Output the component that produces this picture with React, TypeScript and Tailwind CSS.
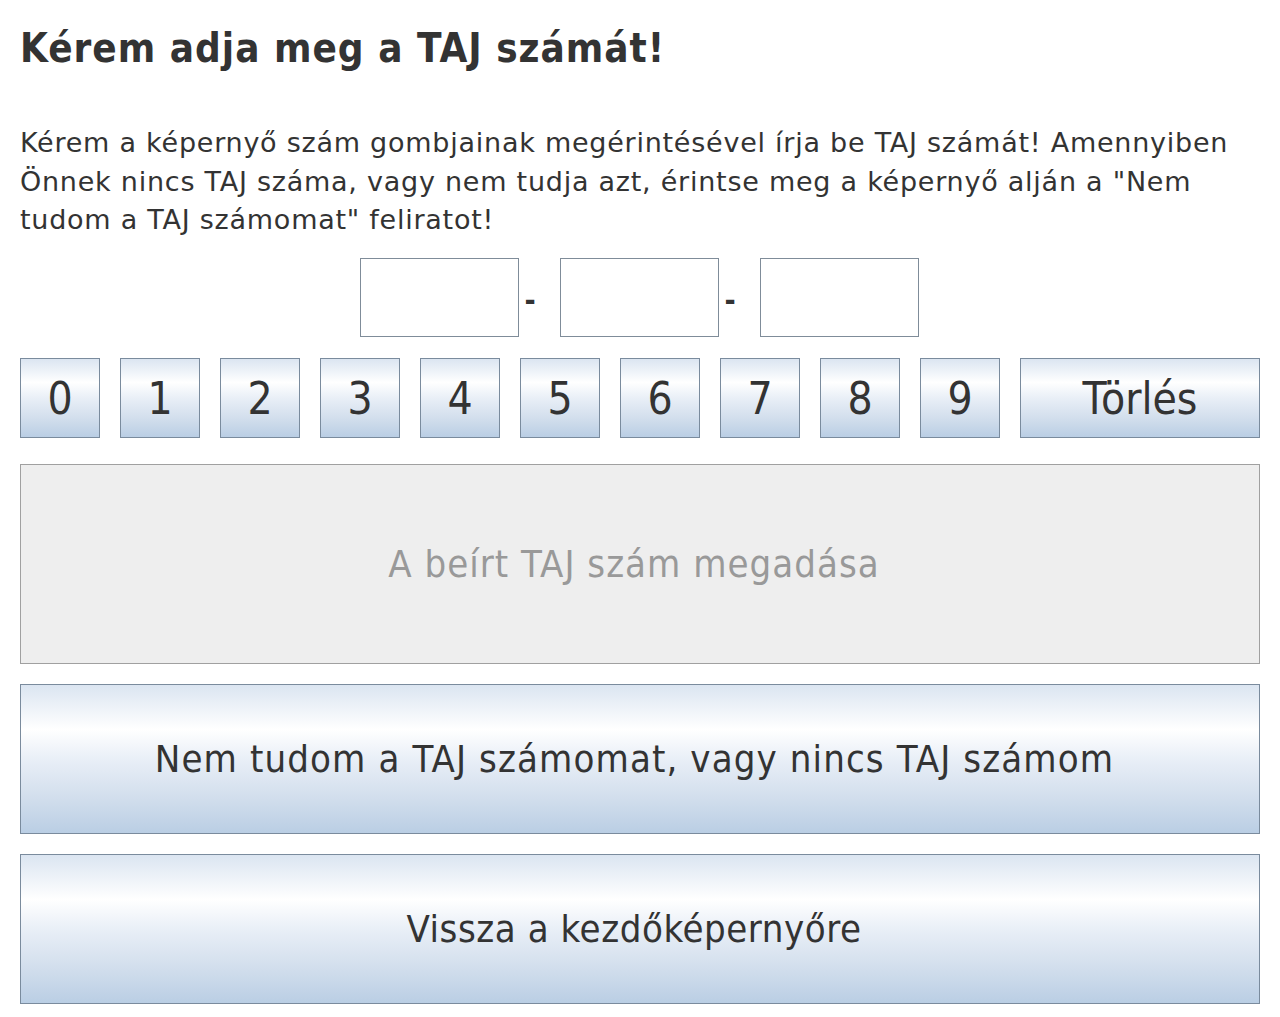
import React from "react";

const cond = { fontFamily: '"DejaVu Sans Condensed", "DejaVu Sans", Tahoma, sans-serif' };
const reg = { fontFamily: '"DejaVu Sans", Tahoma, sans-serif' };

const grad =
  "bg-[linear-gradient(to_bottom,#dbe5f1_0%,#ffffff_30%,#e9eff7_50%,#d3dfed_75%,#bacee4_100%)]";

export default function App() {
  const digits = ["0", "1", "2", "3", "4", "5", "6", "7", "8", "9"];
  return (
    <div className="w-[1280px] h-[1017px] bg-white px-5 text-[#333333]" style={cond}>
      <h1 className="pt-[24px] text-[40px] leading-[48px] font-bold tracking-[1px]">Kérem adja meg a TAJ számát!</h1>
      <p className="mt-[52px] text-[27px] leading-[38.5px] tracking-[0.75px]" style={reg}>
        Kérem a képernyő szám gombjainak megérintésével írja be TAJ számát! Amennyiben
        <br />
        Önnek nincs TAJ száma, vagy nem tudja azt, érintse meg a képernyő alján a "Nem
        <br />
        tudom a TAJ számomat" feliratot!
      </p>
      <div className="mt-[18px] flex justify-center items-center pr-[2px]">
        <div className="w-[159px] h-[79px] border border-[#7f8c99] bg-white" />
        <span className="w-[41px] pl-[6px] text-left text-[30px] font-bold leading-none pt-[8px]">-</span>
        <div className="w-[159px] h-[79px] border border-[#7f8c99] bg-white" />
        <span className="w-[41px] pl-[6px] text-left text-[30px] font-bold leading-none pt-[8px]">-</span>
        <div className="w-[159px] h-[79px] border border-[#7f8c99] bg-white" />
      </div>
      <div className="mt-[21px] flex gap-5">
        {digits.map((d) => (
          <div
            key={d}
            className={`w-[80px] h-[80px] border border-[#7a8b9d] ${grad} flex items-center justify-center text-[44px] pt-[3px]`}
          >
            {d}
          </div>
        ))}
        <div
          className={`w-[240px] h-[80px] border border-[#7a8b9d] ${grad} flex items-center justify-center text-[44px] pt-[3px]`}
        >
          Törlés
        </div>
      </div>
      <div className="mt-[26px] h-[200px] border border-[#a0a0a0] bg-[#eeeeee] flex items-center justify-center text-[38px] tracking-[1px] text-[#999999] pt-[2px] pr-[12px]">
        A beírt TAJ szám megadása
      </div>
      <div
        className={`mt-5 h-[150px] border border-[#7a8b9d] ${grad} flex items-center justify-center text-[38px] tracking-[1.1px] pt-[2px] pr-[11px]`}
      >
        Nem tudom a TAJ számomat, vagy nincs TAJ számom
      </div>
      <div
        className={`mt-5 h-[150px] border border-[#7a8b9d] ${grad} flex items-center justify-center text-[38px] tracking-[0.55px] pt-[2px] pr-[12px]`}
      >
        Vissza a kezdőképernyőre
      </div>
    </div>
  );
}
